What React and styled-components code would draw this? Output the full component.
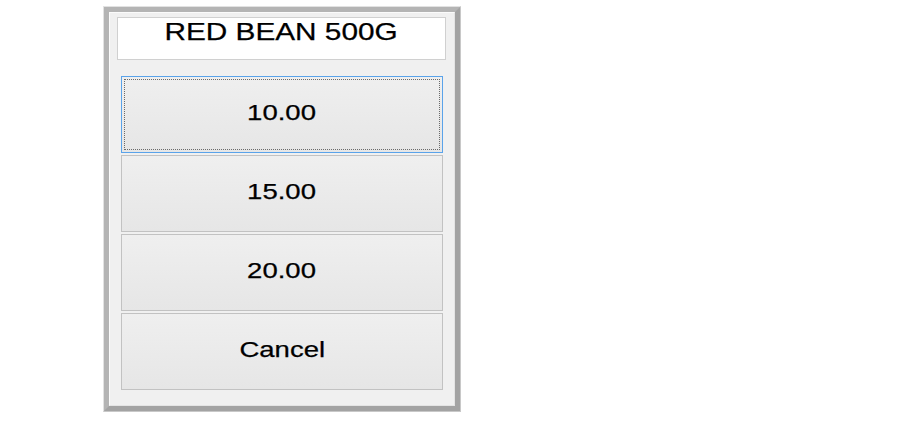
import React from 'react'
import styled, { createGlobalStyle } from 'styled-components'

const GlobalStyle = createGlobalStyle`
    html, body {
        margin: 0;
        padding: 0;
        background: #ffffff;
    }
    body {
        font-family: "Liberation Sans", Arial, sans-serif;
    }
`

const Page = styled.div`
    padding: 6px 0 0 103px;
`

const Window = styled.div`
    width: 358px;
    box-sizing: border-box;
    border: 1px solid #e2e2e2;
    border-right-color: #c8c8c8;
    border-bottom-color: #c8c8c8;
`

const Frame = styled.div`
    border: 5px solid #b4b4b4;
    border-right-color: #a3a3a3;
    border-bottom-color: #a3a3a3;
    background: #f0f0f0;
`

const Inner = styled.div`
    border: 1px solid #fbfbfb;
    border-right-color: #e4e4e4;
    border-bottom-color: #e4e4e4;
    padding: 4px 8px 15px 7px;
    display: flex;
    flex-direction: column;
`

const TitleBox = styled.div`
    height: 43px;
    box-sizing: border-box;
    background: #ffffff;
    border: 1px solid #d0d0d0;
    display: flex;
    justify-content: center;
    align-items: flex-start;
    padding-top: 2px;
    color: #000;
    font-size: 24px;
    line-height: 24px;
`

const ButtonList = styled.div`
    display: flex;
    flex-direction: column;
    gap: 2px;
    margin-top: 16px;
    padding: 0 3px 0 4px;
`

const PriceButton = styled.button`
    position: relative;
    height: 77px;
    box-sizing: border-box;
    border: 1px solid ${p => (p.$focused ? '#5aa3ea' : '#c2c2c2')};
    background: linear-gradient(#efefef, #e6e6e6);
    display: flex;
    justify-content: center;
    align-items: center;
    padding: 0 0 3px 0;
    font-family: "Liberation Sans", Arial, sans-serif;
    font-size: 22px;
    line-height: 24px;
    color: #000;
    cursor: pointer;

    &::after {
        content: '';
        display: ${p => (p.$focused ? 'block' : 'none')};
        position: absolute;
        inset: 2px;
        border: 1px dotted #6a6a6a;
    }
`

const Wide = styled.span`
    display: inline-block;
    transform: scaleX(${p => p.$scale || 1.25});
    -webkit-text-stroke: 0.25px #000;
`

const prices = ['10.00', '15.00', '20.00']

export default function App() {
    return (
        <>
            <GlobalStyle />
            <Page>
                <Window>
                    <Frame>
                        <Inner>
                            <TitleBox>
                                <Wide $scale={1.24}>RED BEAN 500G</Wide>
                            </TitleBox>
                            <ButtonList>
                                {prices.map((p, i) => (
                                    <PriceButton key={p} $focused={i === 0}>
                                        <Wide>{p}</Wide>
                                    </PriceButton>
                                ))}
                                <PriceButton>
                                    <Wide>Cancel</Wide>
                                </PriceButton>
                            </ButtonList>
                        </Inner>
                    </Frame>
                </Window>
            </Page>
        </>
    )
}
